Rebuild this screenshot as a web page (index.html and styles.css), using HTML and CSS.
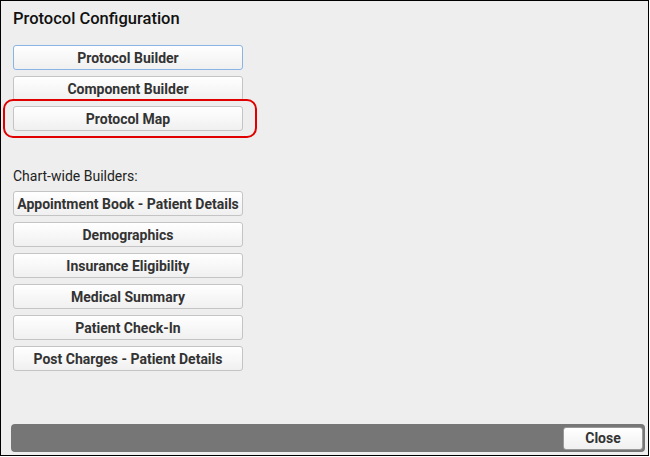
FILE: index.html
```html
<!DOCTYPE html>
<html>
<head>
<meta charset="utf-8">
<link rel="stylesheet" href="styles.css">
</head>
<body>
<div class="dialog">
  <h1 class="title">Protocol Configuration</h1>
  <div class="group">
    <button class="btn focus">Protocol Builder</button>
    <button class="btn">Component Builder</button>
    <div class="highlight"><button class="btn">Protocol Map</button></div>
  </div>
  <div class="label">Chart-wide Builders:</div>
  <div class="group group2">
    <button class="btn">Appointment Book - Patient Details</button>
    <button class="btn">Demographics</button>
    <button class="btn">Insurance Eligibility</button>
    <button class="btn">Medical Summary</button>
    <button class="btn">Patient Check-In</button>
    <button class="btn">Post Charges - Patient Details</button>
  </div>
  <div class="spacer"></div>
  <div class="footer">
    <button class="btn close">Close</button>
  </div>
</div>
</body>
</html>
```

FILE: styles.css
```css
html, body {
  margin: 0;
  padding: 0;
  background: #ffffff;
}
.dialog {
  box-sizing: border-box;
  width: 649px;
  height: 456px;
  border: 1px solid #000;
  background: #eeeeee;
  display: flex;
  flex-direction: column;
  padding: 0 3px 3px 10px;
  font-family: Roboto, "Liberation Sans", sans-serif;
}
.title {
  margin: 8px 0 0 2px;
  font-size: 16.5px;
  font-weight: 500;
  color: #111;
  line-height: 19px;
  height: 19px;
}
.group {
  display: flex;
  flex-direction: column;
  gap: 6px;
  margin-top: 17px;
  padding-left: 2px;
}
.btn {
  box-sizing: border-box;
  width: 230px;
  height: 25px;
  margin: 0;
  padding: 0;
  border: 1px solid #c4c4c4;
  border-radius: 3px;
  background: linear-gradient(#ffffff, #f0f0f0);
  font-family: Roboto, "Liberation Sans", sans-serif;
  font-size: 14px;
  font-weight: 700;
  color: #333;
  text-align: center;
  white-space: nowrap;
}
.btn.focus {
  border-color: #8ab4e6;
}
.highlight {
  box-sizing: border-box;
  margin-left: -10px;
  margin-top: -8px;
  width: 254px;
  height: 39px;
  border: 2px solid #e00000;
  border-radius: 10px;
  display: flex;
  align-items: center;
  padding-left: 8px;
}
.label {
  margin: 30px 0 0 2px;
  font-size: 14px;
  color: #222;
  line-height: 16px;
}
.group2 {
  margin-top: 7px;
}
.spacer {
  flex: 1;
}
.footer {
  height: 28px;
  background: #767676;
  border-radius: 4px;
  display: flex;
  justify-content: flex-end;
  align-items: center;
  padding-right: 2px;
}
.btn.close {
  width: 80px;
  height: 23px;
  border-color: #999;
}
```
